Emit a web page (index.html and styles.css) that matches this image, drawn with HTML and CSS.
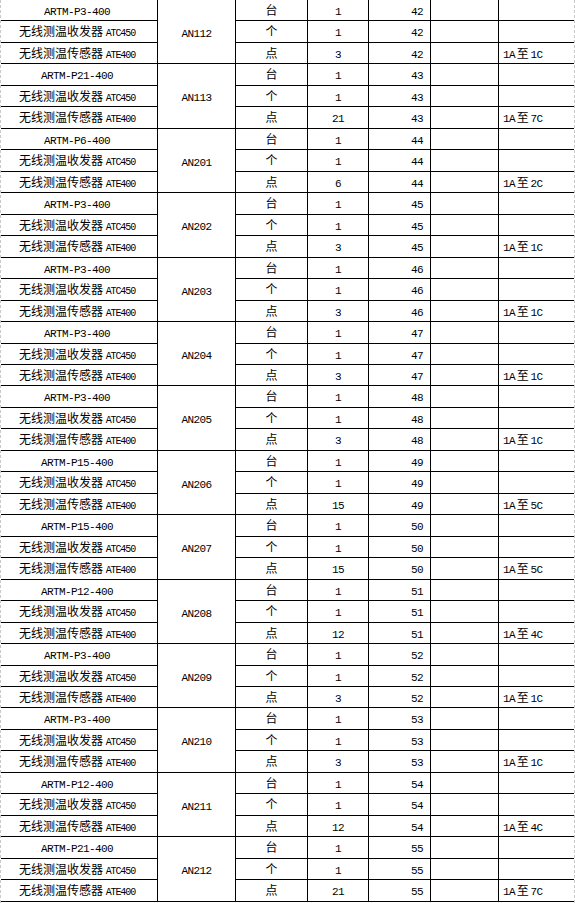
FILE: index.html
```html
<!DOCTYPE html>
<html lang="zh-CN">
<head>
<meta charset="utf-8">
<title>无线测温设备清单</title>
<link rel="stylesheet" href="styles.css">
</head>
<body>
<div class="sheet">
  <div class="grid">
    <div class="c c1"><span class="m">ARTM-P3-400</span></div><div class="c c2 an"><span class="m">AN112</span></div><div class="c c3">台</div><div class="c c4"><span class="m">1</span></div><div class="c c5"><span class="m">42</span></div><div class="c c6"></div><div class="c c7"></div>
    <div class="c c1">无线测温收发器 <span class="s">ATC450</span></div><div class="c c3">个</div><div class="c c4"><span class="m">1</span></div><div class="c c5"><span class="m">42</span></div><div class="c c6"></div><div class="c c7"></div>
    <div class="c c1">无线测温传感器 <span class="s">ATE400</span></div><div class="c c3">点</div><div class="c c4"><span class="m">3</span></div><div class="c c5"><span class="m">42</span></div><div class="c c6"></div><div class="c c7"><span class="m">1A</span> 至 <span class="m">1C</span></div>

    <div class="c c1"><span class="m">ARTM-P21-400</span></div><div class="c c2 an"><span class="m">AN113</span></div><div class="c c3">台</div><div class="c c4"><span class="m">1</span></div><div class="c c5"><span class="m">43</span></div><div class="c c6"></div><div class="c c7"></div>
    <div class="c c1">无线测温收发器 <span class="s">ATC450</span></div><div class="c c3">个</div><div class="c c4"><span class="m">1</span></div><div class="c c5"><span class="m">43</span></div><div class="c c6"></div><div class="c c7"></div>
    <div class="c c1">无线测温传感器 <span class="s">ATE400</span></div><div class="c c3">点</div><div class="c c4"><span class="m">21</span></div><div class="c c5"><span class="m">43</span></div><div class="c c6"></div><div class="c c7"><span class="m">1A</span> 至 <span class="m">7C</span></div>

    <div class="c c1"><span class="m">ARTM-P6-400</span></div><div class="c c2 an"><span class="m">AN201</span></div><div class="c c3">台</div><div class="c c4"><span class="m">1</span></div><div class="c c5"><span class="m">44</span></div><div class="c c6"></div><div class="c c7"></div>
    <div class="c c1">无线测温收发器 <span class="s">ATC450</span></div><div class="c c3">个</div><div class="c c4"><span class="m">1</span></div><div class="c c5"><span class="m">44</span></div><div class="c c6"></div><div class="c c7"></div>
    <div class="c c1">无线测温传感器 <span class="s">ATE400</span></div><div class="c c3">点</div><div class="c c4"><span class="m">6</span></div><div class="c c5"><span class="m">44</span></div><div class="c c6"></div><div class="c c7"><span class="m">1A</span> 至 <span class="m">2C</span></div>

    <div class="c c1"><span class="m">ARTM-P3-400</span></div><div class="c c2 an"><span class="m">AN202</span></div><div class="c c3">台</div><div class="c c4"><span class="m">1</span></div><div class="c c5"><span class="m">45</span></div><div class="c c6"></div><div class="c c7"></div>
    <div class="c c1">无线测温收发器 <span class="s">ATC450</span></div><div class="c c3">个</div><div class="c c4"><span class="m">1</span></div><div class="c c5"><span class="m">45</span></div><div class="c c6"></div><div class="c c7"></div>
    <div class="c c1">无线测温传感器 <span class="s">ATE400</span></div><div class="c c3">点</div><div class="c c4"><span class="m">3</span></div><div class="c c5"><span class="m">45</span></div><div class="c c6"></div><div class="c c7"><span class="m">1A</span> 至 <span class="m">1C</span></div>

    <div class="c c1"><span class="m">ARTM-P3-400</span></div><div class="c c2 an"><span class="m">AN203</span></div><div class="c c3">台</div><div class="c c4"><span class="m">1</span></div><div class="c c5"><span class="m">46</span></div><div class="c c6"></div><div class="c c7"></div>
    <div class="c c1">无线测温收发器 <span class="s">ATC450</span></div><div class="c c3">个</div><div class="c c4"><span class="m">1</span></div><div class="c c5"><span class="m">46</span></div><div class="c c6"></div><div class="c c7"></div>
    <div class="c c1">无线测温传感器 <span class="s">ATE400</span></div><div class="c c3">点</div><div class="c c4"><span class="m">3</span></div><div class="c c5"><span class="m">46</span></div><div class="c c6"></div><div class="c c7"><span class="m">1A</span> 至 <span class="m">1C</span></div>

    <div class="c c1"><span class="m">ARTM-P3-400</span></div><div class="c c2 an"><span class="m">AN204</span></div><div class="c c3">台</div><div class="c c4"><span class="m">1</span></div><div class="c c5"><span class="m">47</span></div><div class="c c6"></div><div class="c c7"></div>
    <div class="c c1">无线测温收发器 <span class="s">ATC450</span></div><div class="c c3">个</div><div class="c c4"><span class="m">1</span></div><div class="c c5"><span class="m">47</span></div><div class="c c6"></div><div class="c c7"></div>
    <div class="c c1">无线测温传感器 <span class="s">ATE400</span></div><div class="c c3">点</div><div class="c c4"><span class="m">3</span></div><div class="c c5"><span class="m">47</span></div><div class="c c6"></div><div class="c c7"><span class="m">1A</span> 至 <span class="m">1C</span></div>

    <div class="c c1"><span class="m">ARTM-P3-400</span></div><div class="c c2 an"><span class="m">AN205</span></div><div class="c c3">台</div><div class="c c4"><span class="m">1</span></div><div class="c c5"><span class="m">48</span></div><div class="c c6"></div><div class="c c7"></div>
    <div class="c c1">无线测温收发器 <span class="s">ATC450</span></div><div class="c c3">个</div><div class="c c4"><span class="m">1</span></div><div class="c c5"><span class="m">48</span></div><div class="c c6"></div><div class="c c7"></div>
    <div class="c c1">无线测温传感器 <span class="s">ATE400</span></div><div class="c c3">点</div><div class="c c4"><span class="m">3</span></div><div class="c c5"><span class="m">48</span></div><div class="c c6"></div><div class="c c7"><span class="m">1A</span> 至 <span class="m">1C</span></div>

    <div class="c c1"><span class="m">ARTM-P15-400</span></div><div class="c c2 an"><span class="m">AN206</span></div><div class="c c3">台</div><div class="c c4"><span class="m">1</span></div><div class="c c5"><span class="m">49</span></div><div class="c c6"></div><div class="c c7"></div>
    <div class="c c1">无线测温收发器 <span class="s">ATC450</span></div><div class="c c3">个</div><div class="c c4"><span class="m">1</span></div><div class="c c5"><span class="m">49</span></div><div class="c c6"></div><div class="c c7"></div>
    <div class="c c1">无线测温传感器 <span class="s">ATE400</span></div><div class="c c3">点</div><div class="c c4"><span class="m">15</span></div><div class="c c5"><span class="m">49</span></div><div class="c c6"></div><div class="c c7"><span class="m">1A</span> 至 <span class="m">5C</span></div>

    <div class="c c1"><span class="m">ARTM-P15-400</span></div><div class="c c2 an"><span class="m">AN207</span></div><div class="c c3">台</div><div class="c c4"><span class="m">1</span></div><div class="c c5"><span class="m">50</span></div><div class="c c6"></div><div class="c c7"></div>
    <div class="c c1">无线测温收发器 <span class="s">ATC450</span></div><div class="c c3">个</div><div class="c c4"><span class="m">1</span></div><div class="c c5"><span class="m">50</span></div><div class="c c6"></div><div class="c c7"></div>
    <div class="c c1">无线测温传感器 <span class="s">ATE400</span></div><div class="c c3">点</div><div class="c c4"><span class="m">15</span></div><div class="c c5"><span class="m">50</span></div><div class="c c6"></div><div class="c c7"><span class="m">1A</span> 至 <span class="m">5C</span></div>

    <div class="c c1"><span class="m">ARTM-P12-400</span></div><div class="c c2 an"><span class="m">AN208</span></div><div class="c c3">台</div><div class="c c4"><span class="m">1</span></div><div class="c c5"><span class="m">51</span></div><div class="c c6"></div><div class="c c7"></div>
    <div class="c c1">无线测温收发器 <span class="s">ATC450</span></div><div class="c c3">个</div><div class="c c4"><span class="m">1</span></div><div class="c c5"><span class="m">51</span></div><div class="c c6"></div><div class="c c7"></div>
    <div class="c c1">无线测温传感器 <span class="s">ATE400</span></div><div class="c c3">点</div><div class="c c4"><span class="m">12</span></div><div class="c c5"><span class="m">51</span></div><div class="c c6"></div><div class="c c7"><span class="m">1A</span> 至 <span class="m">4C</span></div>

    <div class="c c1"><span class="m">ARTM-P3-400</span></div><div class="c c2 an"><span class="m">AN209</span></div><div class="c c3">台</div><div class="c c4"><span class="m">1</span></div><div class="c c5"><span class="m">52</span></div><div class="c c6"></div><div class="c c7"></div>
    <div class="c c1">无线测温收发器 <span class="s">ATC450</span></div><div class="c c3">个</div><div class="c c4"><span class="m">1</span></div><div class="c c5"><span class="m">52</span></div><div class="c c6"></div><div class="c c7"></div>
    <div class="c c1">无线测温传感器 <span class="s">ATE400</span></div><div class="c c3">点</div><div class="c c4"><span class="m">3</span></div><div class="c c5"><span class="m">52</span></div><div class="c c6"></div><div class="c c7"><span class="m">1A</span> 至 <span class="m">1C</span></div>

    <div class="c c1"><span class="m">ARTM-P3-400</span></div><div class="c c2 an"><span class="m">AN210</span></div><div class="c c3">台</div><div class="c c4"><span class="m">1</span></div><div class="c c5"><span class="m">53</span></div><div class="c c6"></div><div class="c c7"></div>
    <div class="c c1">无线测温收发器 <span class="s">ATC450</span></div><div class="c c3">个</div><div class="c c4"><span class="m">1</span></div><div class="c c5"><span class="m">53</span></div><div class="c c6"></div><div class="c c7"></div>
    <div class="c c1">无线测温传感器 <span class="s">ATE400</span></div><div class="c c3">点</div><div class="c c4"><span class="m">3</span></div><div class="c c5"><span class="m">53</span></div><div class="c c6"></div><div class="c c7"><span class="m">1A</span> 至 <span class="m">1C</span></div>

    <div class="c c1"><span class="m">ARTM-P12-400</span></div><div class="c c2 an"><span class="m">AN211</span></div><div class="c c3">台</div><div class="c c4"><span class="m">1</span></div><div class="c c5"><span class="m">54</span></div><div class="c c6"></div><div class="c c7"></div>
    <div class="c c1">无线测温收发器 <span class="s">ATC450</span></div><div class="c c3">个</div><div class="c c4"><span class="m">1</span></div><div class="c c5"><span class="m">54</span></div><div class="c c6"></div><div class="c c7"></div>
    <div class="c c1">无线测温传感器 <span class="s">ATE400</span></div><div class="c c3">点</div><div class="c c4"><span class="m">12</span></div><div class="c c5"><span class="m">54</span></div><div class="c c6"></div><div class="c c7"><span class="m">1A</span> 至 <span class="m">4C</span></div>

    <div class="c c1"><span class="m">ARTM-P21-400</span></div><div class="c c2 an"><span class="m">AN212</span></div><div class="c c3">台</div><div class="c c4"><span class="m">1</span></div><div class="c c5"><span class="m">55</span></div><div class="c c6"></div><div class="c c7"></div>
    <div class="c c1">无线测温收发器 <span class="s">ATC450</span></div><div class="c c3">个</div><div class="c c4"><span class="m">1</span></div><div class="c c5"><span class="m">55</span></div><div class="c c6"></div><div class="c c7"></div>
    <div class="c c1">无线测温传感器 <span class="s">ATE400</span></div><div class="c c3">点</div><div class="c c4"><span class="m">21</span></div><div class="c c5"><span class="m">55</span></div><div class="c c6"></div><div class="c c7"><span class="m">1A</span> 至 <span class="m">7C</span></div>
  </div>
</div>
</body>
</html>
```

FILE: styles.css
```css
html, body {
  margin: 0;
  padding: 0;
  background: #ffffff;
}

.sheet {
  width: 573px;
  height: 903px;
  overflow: hidden;
  border-left: 1px dashed #c8c8c8;
  border-right: 1px dashed #c8c8c8;
}

.grid {
  display: grid;
  grid-template-columns: 157px 78px 72px 61px 62px 68px 75px;
  grid-template-rows: repeat(42, 21.47px);
  grid-auto-flow: row dense;
}

.c {
  box-sizing: border-box;
  border-bottom: 1px solid #000;
  border-right: 1px solid #000;
  display: block;
  text-align: center;
  font-family: "Noto Sans CJK SC", "Noto Sans CJK JP", sans-serif;
  font-size: 12px;
  line-height: 20px;
  color: #000;
  white-space: nowrap;
  overflow: hidden;
}

.c1 { grid-column: 1; padding-right: 4px; }
.c2 { grid-column: 2; }
.an { grid-row: span 3; line-height: 63px; }
.c3 { grid-column: 3; }
.c4 { grid-column: 4; }
.c5 { grid-column: 5; text-align: right; padding-right: 7px; }
.c6 { grid-column: 6; }
.c7 { grid-column: 7; border-right: none; text-align: left; padding-left: 4px; word-spacing: -1px; }

.m {
  font-family: "Liberation Mono", "DejaVu Sans Mono", monospace;
  font-size: 11px;
  letter-spacing: -0.6px;
}

.s {
  font-family: "Liberation Mono", "DejaVu Sans Mono", monospace;
  font-size: 10px;
  letter-spacing: -1.1px;
}
```
